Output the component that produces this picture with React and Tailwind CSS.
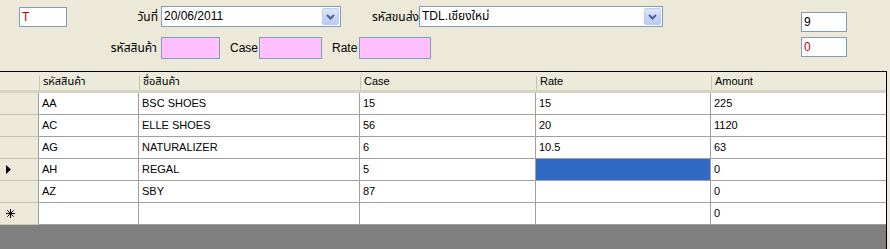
import React from "react";

const FONT = { fontFamily: '"Liberation Sans", "Noto Sans", "Noto Sans Thai", "DejaVu Sans", sans-serif' };

function Chevron() {
  return (
    <svg width="9" height="6" viewBox="0 0 9 6">
      <path d="M1 1 L4.5 4.5 L8 1" fill="none" stroke="#4D6185" strokeWidth="2" />
    </svg>
  );
}

function Combo({ width, value }) {
  return (
    <div className={`flex h-[21px] items-stretch border border-[#7F9DB9] bg-white ${width}`}>
      <div className="flex-1 pl-[2px] text-[12px] leading-[19px] text-black">{value}</div>
      <div className="m-[1px] flex w-[17px] items-center justify-center rounded-[2px] border border-[#B9CCF5] bg-gradient-to-b from-[#DCE6FD] to-[#B6CBF7]">
        <Chevron />
      </div>
    </div>
  );
}

function Box({ className, children }) {
  return (
    <div className={`border border-[#7F9DB9] pl-[2px] text-[12px] leading-[18px] ${className}`}>{children}</div>
  );
}

function Star() {
  return (
    <svg width="9" height="9" viewBox="0 0 9 9">
      <g stroke="#000" strokeWidth="1">
        <path d="M4.5 0 V9" />
        <path d="M0 4.5 H9" />
        <path d="M1.3 1.3 L7.7 7.7" />
        <path d="M7.7 1.3 L1.3 7.7" />
      </g>
    </svg>
  );
}

const cols = [
  { key: "code", w: "w-[100px]" },
  { key: "name", w: "w-[221px]" },
  { key: "case", w: "w-[176px]" },
  { key: "rate", w: "w-[175px]" },
  { key: "amount", w: "w-[175px]" },
];

const headers = ["รหัสสินค้า", "ชื่อสินค้า", "Case", "Rate", "Amount"];

const rows = [
  ["AA", "BSC SHOES", "15", "15", "225"],
  ["AC", "ELLE SHOES", "56", "20", "1120"],
  ["AG", "NATURALIZER", "6", "10.5", "63"],
  ["AH", "REGAL", "5", "", "0"],
  ["AZ", "SBY", "87", "", "0"],
  ["", "", "", "", "0"],
];

export default function App() {
  return (
    <div className="flex h-[249px] w-[890px] flex-col bg-[#ECE9D8] text-black" style={FONT}>
      {/* top panel */}
      <div className="flex h-[71px] shrink-0">
        <div className="flex flex-col">
          <div className="mt-[6px] flex h-[21px] items-center">
            <Box className="ml-[19px] mt-[1px] h-[20px] w-[48px] bg-white text-[#C00000]">T</Box>
            <div className="w-[94px] pr-[3px] text-right text-[12px]">วันที่</div>
            <Combo width="w-[180px]" value="20/06/2011" />
            <div className="ml-[31px] w-[47px] text-[12px]">รหัสขนส่ง</div>
            <Combo width="w-[244px]" value="TDL.เชียงใหม่" />
          </div>
          <div className="mt-[10px] flex h-[22px] items-center">
            <div className="w-[161px] pr-[4px] text-right text-[12px]">รหัสสินค้า</div>
            <div className="h-[22px] w-[59px] border border-[#7F9DB9] bg-[#FFC0FF]" />
            <div className="ml-[10px] w-[29px] text-[12px]">Case</div>
            <div className="h-[22px] w-[63px] border border-[#7F9DB9] bg-[#FFC0FF]" />
            <div className="ml-[10px] w-[27px] text-[12px]">Rate</div>
            <div className="h-[22px] w-[72px] border border-[#7F9DB9] bg-[#FFC0FF]" />
          </div>
        </div>
        <div className="ml-[138px] mt-[12px] flex flex-col gap-[5px]">
          <Box className="h-[20px] w-[46px] bg-white">9</Box>
          <Box className="h-[20px] w-[46px] bg-white text-[#C00000]">0</Box>
        </div>
      </div>

      {/* grid */}
      <div className="flex w-[887px] flex-1 flex-col border-r border-t border-r-black border-t-black bg-[#808080]">
        {/* header */}
        <div className="flex h-[21px] bg-[#EBEADB] text-[11px]">
          <div className="w-[39px] border-b-[3px] border-b-[#D6D2C2]" />
          {cols.map((c, i) => (
            <div key={c.key} className={`${c.w} relative flex items-center border-b-[3px] border-b-[#D6D2C2] pl-[4px] pt-[1px]`}>
              <div className="absolute left-0 top-[4px] h-[14px] w-[1px] bg-[#C7C5B2]" />
              {headers[i]}
            </div>
          ))}
        </div>
        {rows.map((r, ri) => (
          <div key={ri} className="flex h-[22px] text-[11px]">
            <div className="flex w-[39px] items-center border-b border-r border-b-[#C7C5B2] border-r-[#A0A0A0] bg-[#ECE9D8] pl-[6px]">
              {ri === 3 && (
                <svg width="5" height="9" viewBox="0 0 5 9">
                  <path d="M0 0 L5 4.5 L0 9 Z" fill="#000" />
                </svg>
              )}
              {ri === 5 && <Star />}
            </div>
            {cols.map((c, ci) => {
              const selected = ri === 3 && ci === 3;
              return (
                <div
                  key={c.key}
                  className={`${c.w} flex items-center border-b border-b-[#A0A0A0] pl-[3px] ${ci < 4 ? "border-r border-r-[#A0A0A0]" : ""} ${selected ? "bg-[#316AC5]" : "bg-white"}`}
                >
                  {r[ci]}
                </div>
              );
            })}
          </div>
        ))}
      </div>
    </div>
  );
}
